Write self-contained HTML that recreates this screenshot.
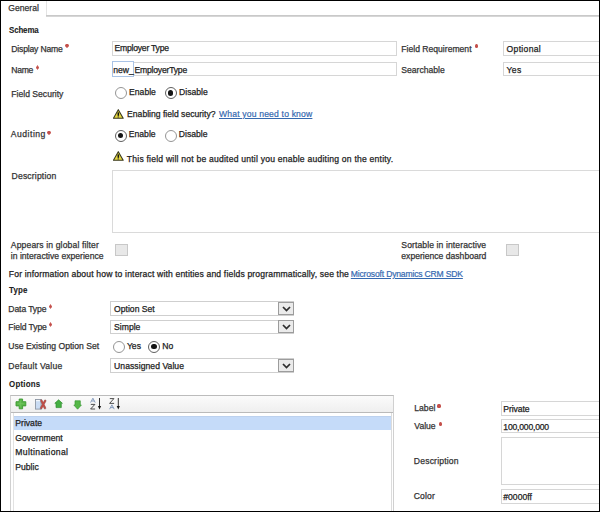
<!DOCTYPE html>
<html><head><meta charset="utf-8">
<style>
html,body{margin:0;padding:0;}
body{width:600px;height:512px;position:relative;overflow:hidden;background:#fff;font-family:"Liberation Sans",sans-serif;}
.frame{position:absolute;left:0;top:0;width:598px;height:510px;border:1px solid #000;z-index:10;}
.t{position:absolute;font-size:8.6px;line-height:10px;height:10px;white-space:nowrap;color:#333;margin-left:-0.7px;-webkit-text-stroke:0.25px #333;}
.b{font-weight:bold;font-size:8.8px;color:#222;-webkit-text-stroke:0.1px #222;transform:scaleX(0.9);transform-origin:0 0;}
.v{color:#222;-webkit-text-stroke:0.25px #222;}
.req{position:absolute;width:4px;height:4px;}
.req::before{content:"";position:absolute;left:0.4px;top:0.4px;width:3.2px;height:3.2px;border-radius:50%;background:#c4504b;}
.req::after{content:"";position:absolute;left:1.4px;top:-0.3px;width:1.2px;height:4.6px;background:rgba(196,80,75,0.6);}
.inp{position:absolute;border:1px solid #d6d6d6;background:#fff;box-sizing:border-box;}
.radio{position:absolute;width:12px;height:12px;box-sizing:border-box;border:1px solid #959595;border-radius:50%;background:#fff;}
.radio.on{border-color:#606060;}
.radio.on::after{content:"";position:absolute;left:2.2px;top:2.2px;width:5.6px;height:5.6px;border-radius:50%;background:#151515;}
.chk{position:absolute;width:12.5px;height:12px;box-sizing:border-box;border:1px solid #c8c8c8;background:#e8e8e8;}
.sel{position:absolute;border:1px solid #cfcfcf;box-sizing:border-box;background:#fff;}
.btn{position:absolute;right:-1px;top:-0.5px;bottom:0;width:16px;box-sizing:border-box;border:1px solid #9c9c9c;background:#ebebeb;}
.link{color:#3569b0;text-decoration:underline;-webkit-text-stroke:0.2px #3569b0;}
</style></head><body>
<div class="frame"></div>

<!-- tab -->
<div style="position:absolute;left:46px;top:1px;width:1px;height:15px;background:#e4e4e4"></div>
<div style="position:absolute;left:46px;top:15px;width:553px;height:1px;background:#c9c9c9"></div><div style="position:absolute;left:46px;top:16px;width:553px;height:1px;background:#d6d6d6"></div>
<div class="t" style="left:9px;top:3px;">General</div>

<div class="t b" style="left:9.6px;top:24.7px;letter-spacing:-0.15px;">Schema</div>

<!-- Display Name -->
<div class="t" style="left:12px;top:44px;letter-spacing:-0.18px;">Display Name</div>
<div class="req" style="left:65.0px;top:43.8px;"></div>
<div class="inp" style="left:112px;top:41px;width:285px;height:14.5px;"></div>
<div class="t v" style="left:115.2px;top:43.4px;letter-spacing:-0.22px;">Employer Type</div>
<div class="t" style="left:402px;top:44px;">Field Requirement</div>
<div class="req" style="left:35.3px;top:65.3px;"></div>
<div class="inp" style="left:503px;top:41px;width:120px;height:14.5px;"></div>
<div class="t v" style="left:507.3px;top:44px;letter-spacing:0.3px;">Optional</div>

<!-- Name -->
<div class="t" style="left:12px;top:65px;letter-spacing:-0.3px;">Name</div>
<div class="req" style="left:474.7px;top:44.0px;"></div>
<div class="inp" style="left:133px;top:62px;width:264px;height:14px;"></div>
<div class="inp" style="left:112px;top:61px;width:22px;height:16px;border-color:#a9c3e6;"></div>
<div class="t v" style="left:114px;top:64.5px;">new_</div>
<div class="t v" style="left:135.2px;top:65px;letter-spacing:-0.2px;">EmployerType</div>
<div class="t" style="left:402px;top:65px;">Searchable</div>
<div class="inp" style="left:503px;top:62px;width:120px;height:14px;"></div>
<div class="t v" style="left:507.3px;top:65px;letter-spacing:0.3px;">Yes</div>

<!-- Field Security -->
<div class="t" style="left:12px;top:88.5px;">Field Security</div>
<div class="radio" style="left:114.5px;top:87px;"></div>
<div class="t v" style="left:129.8px;top:87.2px;">Enable</div>
<div class="radio on" style="left:164.5px;top:87px;"></div>
<div class="t v" style="left:179.8px;top:87.2px;">Disable</div>

<svg style="position:absolute;left:113px;top:109px" width="11" height="10" viewBox="0 0 11 10"><path d="M5.3 0.7 L10.2 9.3 L0.4 9.3 Z" fill="#e6d83e" stroke="#3a3a22" stroke-width="1.1" stroke-linejoin="round"/><rect x="4.55" y="3.4" width="1.5" height="3.4" fill="#111"/><rect x="4.6" y="7.4" width="1.3" height="1.1" fill="#333"/></svg>
<div class="t v" style="left:127.8px;top:108.5px;">Enabling field security?</div>
<div class="t link" style="left:219.7px;top:108.5px;letter-spacing:0.17px;">What you need to know</div>

<!-- Auditing -->
<div class="t" style="left:11.5px;top:129px;letter-spacing:0.5px;">Auditing</div>
<div class="req" style="left:47.0px;top:130.8px;"></div>
<div class="radio on" style="left:114.5px;top:129.5px;"></div>
<div class="t v" style="left:129.5px;top:129px;">Enable</div>
<div class="radio" style="left:164.5px;top:129.5px;"></div>
<div class="t v" style="left:179.5px;top:129px;">Disable</div>

<svg style="position:absolute;left:113px;top:151px" width="11" height="10" viewBox="0 0 11 10"><path d="M5.3 0.7 L10.2 9.3 L0.4 9.3 Z" fill="#e6d83e" stroke="#3a3a22" stroke-width="1.1" stroke-linejoin="round"/><rect x="4.55" y="3.4" width="1.5" height="3.4" fill="#111"/><rect x="4.6" y="7.4" width="1.3" height="1.1" fill="#333"/></svg>
<div class="t v" style="left:127.5px;top:153.5px;letter-spacing:0.21px;">This field will not be audited until you enable auditing on the entity.</div>

<!-- Description -->
<div class="t" style="left:12.3px;top:171px;letter-spacing:0.16px;">Description</div>
<div class="inp" style="left:112px;top:170px;width:500px;height:63px;border-color:#dadada;"></div>

<!-- checkboxes -->
<div class="t" style="left:11.5px;top:239.7px;letter-spacing:0.13px;">Appears in global filter</div>
<div class="t" style="left:11.5px;top:250.6px;">in interactive experience</div>
<div class="chk" style="left:115.2px;top:243.5px;"></div>
<div class="t" style="left:402px;top:239.7px;letter-spacing:0.1px;">Sortable in interactive</div>
<div class="t" style="left:402px;top:250.6px;">experience dashboard</div>
<div class="chk" style="left:506.2px;top:243.5px;"></div>

<div class="t v" style="left:9.5px;top:269px;letter-spacing:0.155px;">For information about how to interact with entities and fields programmatically, see the</div>
<div class="t v link" style="left:351.5px;top:269px;letter-spacing:-0.19px;">Microsoft Dynamics CRM SDK</div>

<!-- Type -->
<div class="t b" style="left:9.3px;top:284.9px;letter-spacing:0.2px;">Type</div>
<div class="t" style="left:9px;top:304px;letter-spacing:-0.1px;">Data Type</div>
<div class="req" style="left:48.8px;top:304.7px;"></div>
<div class="sel" style="left:110px;top:301px;width:184px;height:15px;"><div class="btn"><svg style="position:absolute;left:2.6px;top:3px" width="9" height="6" viewBox="0 0 9 6"><path d="M1 1 L4.5 4.6 L8 1" fill="none" stroke="#2e2e2e" stroke-width="1.7"/></svg></div></div>
<div class="t v" style="left:114.8px;top:304.3px;">Option Set</div>

<div class="t" style="left:9px;top:322px;letter-spacing:-0.1px;">Field Type</div>
<div class="req" style="left:48.8px;top:322.7px;"></div>
<div class="sel" style="left:110px;top:319.5px;width:184px;height:14px;"><div class="btn"><svg style="position:absolute;left:2.6px;top:3px" width="9" height="6" viewBox="0 0 9 6"><path d="M1 1 L4.5 4.6 L8 1" fill="none" stroke="#2e2e2e" stroke-width="1.7"/></svg></div></div>
<div class="t v" style="left:114.8px;top:322.3px;">Simple</div>

<div class="t" style="left:9px;top:341px;">Use Existing Option Set</div>
<div class="radio" style="left:112.5px;top:340.5px;"></div>
<div class="t v" style="left:127.6px;top:340.8px;">Yes</div>
<div class="radio on" style="left:148px;top:340.5px;"></div>
<div class="t v" style="left:163px;top:340.8px;">No</div>

<div class="t" style="left:9px;top:360.5px;letter-spacing:0.25px;">Default Value</div>
<div class="sel" style="left:110px;top:358px;width:184px;height:14.5px;"><div class="btn"><svg style="position:absolute;left:2.6px;top:3px" width="9" height="6" viewBox="0 0 9 6"><path d="M1 1 L4.5 4.6 L8 1" fill="none" stroke="#2e2e2e" stroke-width="1.7"/></svg></div></div>
<div class="t v" style="left:114.8px;top:361.1px;letter-spacing:0.05px;">Unassigned Value</div>

<div class="t b" style="left:9.5px;top:378.8px;letter-spacing:0.25px;">Options</div>

<!-- options panel -->
<div style="position:absolute;left:10px;top:395px;width:384px;height:130px;box-sizing:border-box;border:1px solid #d0d0d0;border-top-color:#bcbcbc;background:#fff;"></div>
<div style="position:absolute;left:11px;top:396px;width:382px;height:16px;background:linear-gradient(#fbfbfb,#efefef);border-bottom:1px solid #bababa;"></div>
<div style="position:absolute;left:13px;top:413px;width:377px;height:110px;border-left:1px solid #e2e2e2;border-right:1px solid #dcdcdc;"></div>
<div style="position:absolute;left:14px;top:415.6px;width:376.7px;height:14.1px;background:#c5dbf9;box-shadow:inset 0 1px 0 #bcd1ee;"></div>

<!-- toolbar icons -->
<svg style="position:absolute;left:15px;top:398px" width="12" height="12" viewBox="0 0 12 12"><path d="M4.2 1 H7.6 V3.7 H10.8 V7.9 H7.6 V10.8 H4.2 V7.9 H1 V3.7 H4.2 Z" fill="#5ab74a" stroke="#3c9832" stroke-width="0.9" stroke-linejoin="round"/><path d="M5.2 2.5 V9.3 M2.5 5.8 H9.3" stroke="#7fcf6c" stroke-width="0.8" opacity="0.7"/></svg>
<svg style="position:absolute;left:34px;top:397.5px" width="13" height="13" viewBox="0 0 13 13"><rect x="1.5" y="1.5" width="5.6" height="9.6" fill="#cadcf3" stroke="#8f98a4" stroke-width="0.9"/><rect x="2" y="2" width="4.6" height="1.2" fill="#f4f7fb"/><path d="M7.2 2.6 L11 10.2 M11.2 2.8 L7 10.2" stroke="#3c3c3c" stroke-width="2.6" stroke-linecap="round" opacity="0.35"/><path d="M7.4 2.6 L11 10 M11.2 2.8 L7.2 10" stroke="#bd4e48" stroke-width="1.9" stroke-linecap="round"/></svg>
<svg style="position:absolute;left:53.5px;top:399px" width="10" height="10" viewBox="0 0 10 10"><path d="M4.6 0.8 L8.4 4.3 H7.3 V8.6 H2 V4.3 H0.8 Z" fill="#45b043" stroke="#2f8c2e" stroke-width="0.7" stroke-linejoin="round"/></svg>
<svg style="position:absolute;left:72.5px;top:399.5px" width="10" height="10" viewBox="0 0 10 10"><path d="M2 0.8 H7.3 V5 H8.4 L4.6 9.2 L0.8 5 H2 Z" fill="#55b848" stroke="#3a9a35" stroke-width="0.7" stroke-linejoin="round"/></svg>
<svg style="position:absolute;left:89px;top:397px" width="14" height="14" viewBox="0 0 14 14"><path d="M1.6 5.6 L3.9 1.2 L6.2 5.6 M2.6 4 H5.2" fill="none" stroke="#7a93b8" stroke-width="0.9"/><path d="M1.8 7.4 H5.9 L1.6 12 H6.1" fill="none" stroke="#3a3a3a" stroke-width="0.9"/><path d="M10.5 1 V9.5" stroke="#1a1a1a" stroke-width="0.9"/><path d="M8.9 9 L12.1 9 L10.5 12.4 Z" fill="#111"/></svg>
<svg style="position:absolute;left:108px;top:397px" width="14" height="14" viewBox="0 0 14 14"><path d="M1.8 1.6 H5.9 L1.6 6.4 H6.1" fill="none" stroke="#3a3a3a" stroke-width="0.9"/><path d="M1.6 12.2 L3.9 7.8 L6.2 12.2 M2.6 10.6 H5.2" fill="none" stroke="#7a93b8" stroke-width="0.9"/><path d="M10.3 1 V9.5" stroke="#1a1a1a" stroke-width="0.9"/><path d="M8.7 9 L11.9 9 L10.3 12.4 Z" fill="#111"/></svg>
<div class="t v" style="left:16px;top:417.5px;">Private</div>
<div class="t v" style="left:16px;top:432.5px;">Government</div>
<div class="t v" style="left:16px;top:446.5px;letter-spacing:0.37px;">Multinational</div>
<div class="t v" style="left:16px;top:461.5px;">Public</div>

<!-- right panel -->
<div class="t" style="left:415px;top:402.5px;">Label</div>
<div class="req" style="left:437.0px;top:404.0px;"></div>
<div class="inp" style="left:501px;top:401px;width:120px;height:14.5px;"></div>
<div class="t v" style="left:504px;top:404px;letter-spacing:-0.1px;">Private</div>
<div class="t" style="left:415px;top:420.5px;">Value</div>
<div class="req" style="left:438.6px;top:422.0px;"></div>
<div class="inp" style="left:501px;top:418.5px;width:120px;height:14.5px;"></div>
<div class="t v" style="left:504px;top:421.5px;letter-spacing:-0.2px;">100,000,000</div>
<div class="t" style="left:414.5px;top:455.8px;letter-spacing:0.18px;">Description</div>
<div class="inp" style="left:501px;top:437px;width:120px;height:48px;"></div>
<div class="t" style="left:414.5px;top:490.8px;letter-spacing:0.1px;">Color</div>
<div class="inp" style="left:501px;top:489px;width:120px;height:14.5px;"></div>
<div class="t v" style="left:504px;top:491.5px;">#0000ff</div>

</body></html>
